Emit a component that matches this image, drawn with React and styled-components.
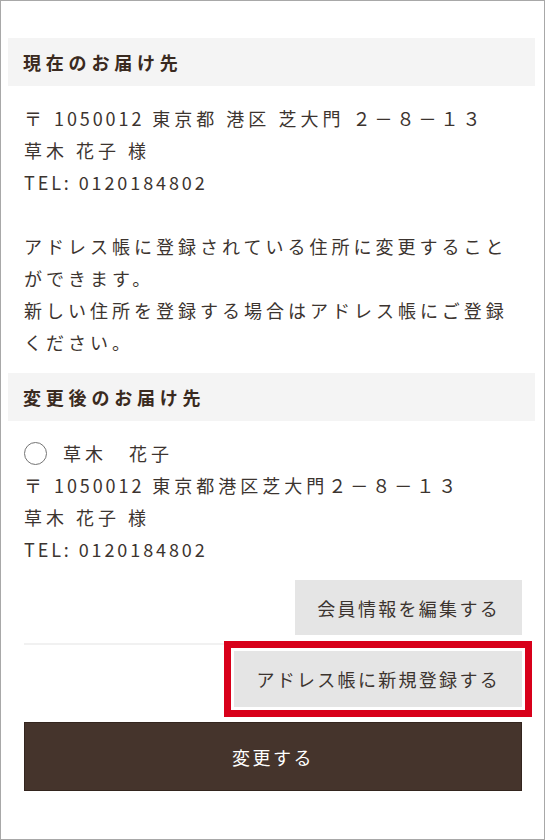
import React from 'react';
import styled, { createGlobalStyle } from 'styled-components';

const GlobalStyle = createGlobalStyle`
    body {
        margin: 0;
        background: #fff;
        font-family: "Noto Sans CJK JP", "Noto Sans", sans-serif;
    }
`;

const Frame = styled.div`
    width: 545px;
    height: 840px;
    box-sizing: border-box;
    border: 1px solid #a8a8a8;
    padding-top: 37px;
    color: #3c342f;
`;

const Heading = styled.h2`
    margin: 0 9px 0 7px;
    height: 48px;
    display: flex;
    align-items: center;
    padding-left: 15px;
    background: #f4f4f4;
    color: #3a2a20;
    font-size: 18px;
    font-weight: 700;
    letter-spacing: 4.8px;
`;

const Body = styled.div`
    padding: 16px 22px 0 23px;
    margin-bottom: ${p => p.$gap || 0}px;
    font-size: 18px;
    line-height: 32px;
    letter-spacing: 4px;
`;

// latin runs (digits, TEL) sit tighter than the kana / kanji
const Latin = styled.span`
    letter-spacing: 2.9px;
`;

const Line = styled.div`
    display: flex;
    align-items: center;
    min-height: 32px;
`;

const Radio = styled.span`
    width: 23px;
    height: 23px;
    box-sizing: border-box;
    border: 1.6px solid #747474;
    border-radius: 50%;
    margin-right: 16px;
    flex: 0 0 auto;
`;

const ButtonRow = styled.div`
    display: flex;
    justify-content: flex-end;
    padding: 0 22px 0 23px;
    margin-top: ${p => p.$top || 0}px;
`;

const GrayButton = styled.button`
    height: ${p => p.$h || 55}px;
    padding: 0 ${p => p.$pad || 22}px;
    border: none;
    background: #e5e5e5;
    color: #3c342f;
    font-family: inherit;
    font-size: 18px;
    letter-spacing: 2.3px;
    cursor: pointer;
    outline: ${p => (p.$marked ? '7px solid #d8001a' : 'none')};
    outline-offset: 3px;
`;

const Divider = styled.hr`
    margin: 8px 22px 0 23px;
    border: none;
    height: 2px;
    background: #f1f1f1;
`;

const SubmitWrap = styled.div`
    padding: 15px 22px 0 23px;
`;

const SubmitButton = styled.button`
    display: block;
    width: 100%;
    height: 69px;
    border: 1px solid #33251e;
    background: #45342c;
    color: #fff;
    font-family: inherit;
    font-size: 18px;
    letter-spacing: 2.5px;
    cursor: pointer;
`;

export default function App() {
    return (
        <>
            <GlobalStyle />
            <Frame>
                <Heading>現在のお届け先</Heading>
                <Body $gap={15}>
                    <div>〒 <Latin>1050012</Latin> 東京都 港区 芝大門 ２－８－１３</div>
                    <div>草木 花子 様</div>
                    <div><Latin>TEL: 0120184802</Latin></div>
                    <br />
                    <div>アドレス帳に登録されている住所に変更すること<br />ができます。</div>
                    <div>新しい住所を登録する場合はアドレス帳にご登録<br />ください。</div>
                </Body>

                <Heading>変更後のお届け先</Heading>
                <Body>
                    <Line>
                        <Radio />
                        <span>草木　花子</span>
                    </Line>
                    <div>〒 <Latin>1050012</Latin> 東京都港区芝大門２－８－１３</div>
                    <div>草木 花子 様</div>
                    <div><Latin>TEL: 0120184802</Latin></div>
                </Body>

                <ButtonRow $top={15}>
                    <GrayButton $h={55} $pad={22}>会員情報を編集する</GrayButton>
                </ButtonRow>
                <Divider />
                <ButtonRow $top={6}>
                    <GrayButton $h={56} $pad={22} $marked>アドレス帳に新規登録する</GrayButton>
                </ButtonRow>
                <SubmitWrap>
                    <SubmitButton>変更する</SubmitButton>
                </SubmitWrap>
            </Frame>
        </>
    );
}
